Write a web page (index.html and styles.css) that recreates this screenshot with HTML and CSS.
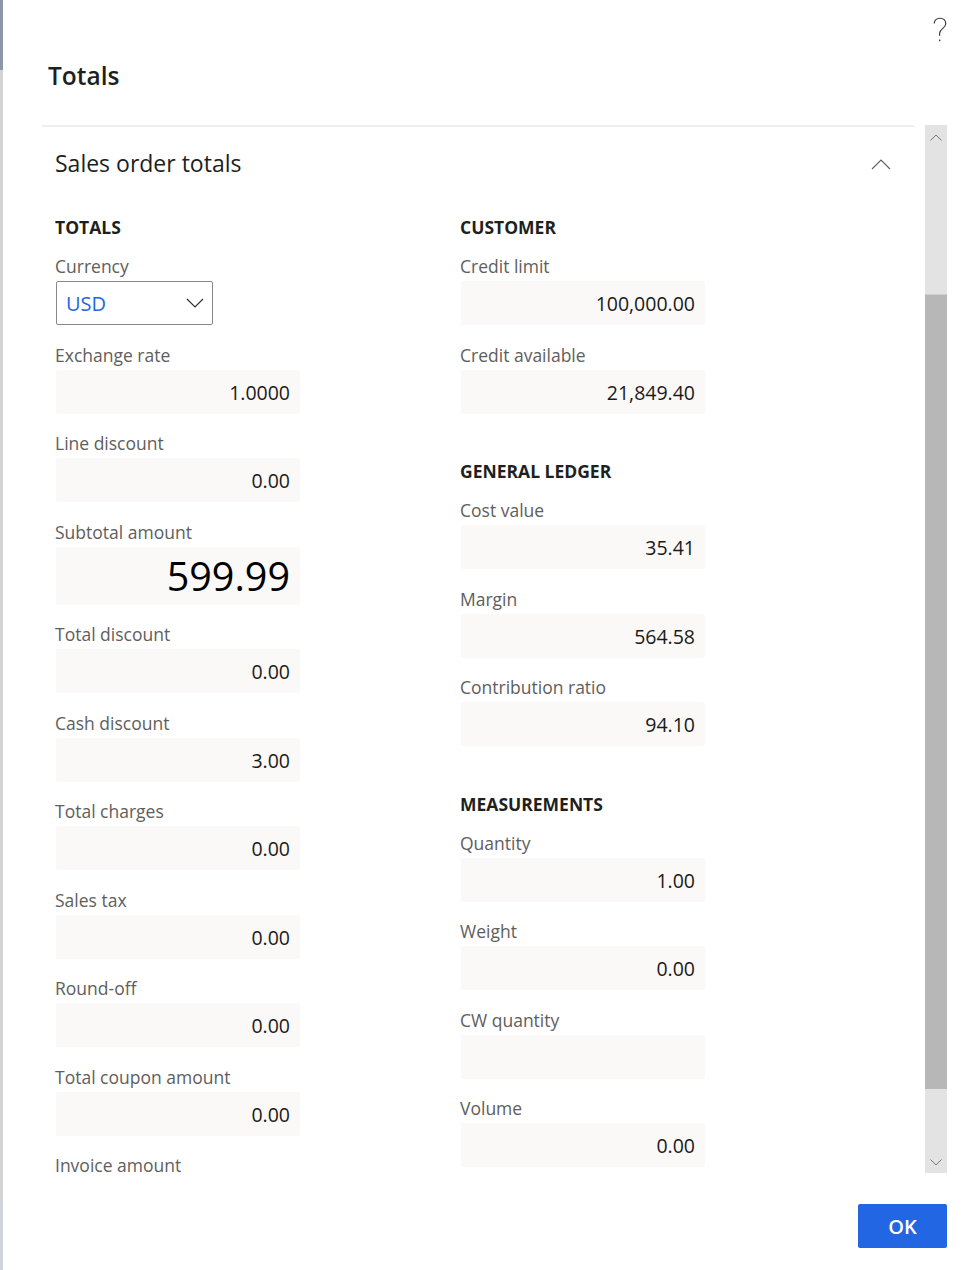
FILE: index.html
```html
<!DOCTYPE html>
<html lang="en">
<head>
<meta charset="utf-8">
<title>Totals</title>
<link rel="stylesheet" href="styles.css">
</head>
<body>
<div class="page">
  <div class="backdrop"><div class="backdrop-top"></div><div class="backdrop-mid"></div><div class="backdrop-bottom"></div></div>
  <div class="dialog">
    <header class="dialog-header">
      <h1 class="dialog-title">Totals</h1>
      <svg class="help-icon" width="16" height="26" viewBox="0 0 16 26" aria-label="Help">
        <path d="M2.2 6.6 C2.2 3.4 4.8 1.2 8 1.2 C11.2 1.2 13.8 3.4 13.8 6.6 C13.8 9.2 12.2 10.4 10.6 11.6 C9 12.8 7.6 14 7.6 16.6 L7.6 18.8" fill="none" stroke="#323130" stroke-width="1.1"/>
        <rect x="7" y="22.6" width="1.3" height="1.6" fill="#323130"/>
      </svg>
    </header>
    <div class="body-row">
      <div class="content">
        <div class="section-header">
          <h2 class="section-title">Sales order totals</h2>
          <svg class="collapse-icon" width="20" height="12" viewBox="0 0 20 12"><path d="M1 11 L10 2 L19 11" fill="none" stroke="#605e5c" stroke-width="1.1"/></svg>
        </div>
        <div class="columns">
          <div class="col">
            <div class="group">
              <div class="group-title">TOTALS</div>
              <div class="field">
                <div class="label">Currency</div>
                <div class="select"><span class="select-text">USD</span><svg width="18" height="10" viewBox="0 0 18 10"><path d="M1 1 L9 9 L17 1" fill="none" stroke="#323130" stroke-width="1.2"/></svg></div>
              </div>
              <div class="field"><div class="label">Exchange rate</div><div class="value">1.0000</div></div>
              <div class="field"><div class="label">Line discount</div><div class="value">0.00</div></div>
              <div class="field"><div class="label">Subtotal amount</div><div class="value big">599.99</div></div>
              <div class="field"><div class="label">Total discount</div><div class="value">0.00</div></div>
              <div class="field"><div class="label">Cash discount</div><div class="value">3.00</div></div>
              <div class="field"><div class="label">Total charges</div><div class="value">0.00</div></div>
              <div class="field"><div class="label">Sales tax</div><div class="value">0.00</div></div>
              <div class="field"><div class="label">Round-off</div><div class="value">0.00</div></div>
              <div class="field"><div class="label">Total coupon amount</div><div class="value">0.00</div></div>
              <div class="field"><div class="label">Invoice amount</div></div>
            </div>
          </div>
          <div class="col">
            <div class="group">
              <div class="group-title">CUSTOMER</div>
              <div class="field"><div class="label">Credit limit</div><div class="value">100,000.00</div></div>
              <div class="field"><div class="label">Credit available</div><div class="value">21,849.40</div></div>
            </div>
            <div class="group">
              <div class="group-title">GENERAL LEDGER</div>
              <div class="field"><div class="label">Cost value</div><div class="value">35.41</div></div>
              <div class="field"><div class="label">Margin</div><div class="value">564.58</div></div>
              <div class="field"><div class="label">Contribution ratio</div><div class="value">94.10</div></div>
            </div>
            <div class="group">
              <div class="group-title">MEASUREMENTS</div>
              <div class="field"><div class="label">Quantity</div><div class="value">1.00</div></div>
              <div class="field"><div class="label">Weight</div><div class="value">0.00</div></div>
              <div class="field"><div class="label">CW quantity</div><div class="value"></div></div>
              <div class="field"><div class="label">Volume</div><div class="value">0.00</div></div>
            </div>
          </div>
        </div>
      </div>
      <div class="scrollbar">
        <div class="sb-up"><svg width="12" height="7" viewBox="0 0 12 7"><path d="M0.5 6.5 L6 1 L11.5 6.5" fill="none" stroke="#777" stroke-width="1"/></svg></div>
        <div class="sb-thumb"></div>
        <div class="sb-down"><svg width="12" height="7" viewBox="0 0 12 7"><path d="M0.5 0.5 L6 6 L11.5 0.5" fill="none" stroke="#777" stroke-width="1"/></svg></div>
      </div>
    </div>
    <footer class="dialog-footer">
      <button class="ok-button" type="button">OK</button>
    </footer>
  </div>
</div>
</body>
</html>
```

FILE: styles.css
```css
html, body {
  margin: 0;
  padding: 0;
  background: #ffffff;
}

body {
  font-family: "Open Sans", "Noto Sans", sans-serif;
  color: #201f1e;
}

.page {
  display: flex;
  width: 968px;
  height: 1270px;
  overflow: hidden;
}

.backdrop {
  width: 3px;
  flex: none;
  display: flex;
  flex-direction: column;
}

.backdrop-top {
  height: 70px;
  background: #8e96a5;
}

.backdrop-mid {
  flex: 1;
  background: #d3d3d3;
}

.backdrop-bottom {
  height: 70px;
  background: #cfd3dd;
}

.dialog {
  flex: 1;
  display: flex;
  flex-direction: column;
  background: #ffffff;
}

.dialog-header {
  height: 125px;
  box-sizing: border-box;
  display: flex;
  justify-content: space-between;
  align-items: flex-start;
  padding: 0 20px 0 45px;
}

.dialog-title {
  margin: 60px 0 0 0;
  font-size: 24.5px;
  line-height: 32px;
  font-weight: 600;
  color: #201f1e;
}

.help-icon {
  margin-top: 17px;
  display: block;
}

.body-row {
  height: 1048px;
  display: flex;
  padding-left: 39px;
  padding-right: 21px;
  gap: 10px;
}

.content {
  flex: 1;
  border-top: 2px solid #efefef;
  border-top-right-radius: 3px;
  padding-left: 14px;
  box-sizing: border-box;
}

.section-header {
  height: 74px;
  display: flex;
  align-items: center;
  justify-content: space-between;
  padding-right: 24px;
}

.section-title {
  margin: -2px 0 0 -1px;
  font-size: 23px;
  line-height: 30px;
  font-weight: 400;
  color: #201f1e;
}

.collapse-icon {
  display: block;
}

.columns {
  display: grid;
  grid-template-columns: 244px 244px;
  column-gap: 161px;
  padding-top: 15px;
}

.group-title {
  font-size: 17.5px;
  line-height: 22px;
  font-weight: 700;
  margin: 0 0 18px -1px;
  color: #201f1e;
  white-space: nowrap;
}

.group + .group .group-title {
  margin-top: 46.5px;
}

.field {
  margin-bottom: 19.5px;
}

.label {
  font-size: 17.5px;
  line-height: 21px;
  font-weight: 500;
  margin: 0 0 4px -1px;
  color: #605e5c;
  white-space: nowrap;
}

.value {
  width: 244px;
  height: 44px;
  box-sizing: border-box;
  background: #faf9f8;
  border-radius: 2px;
  text-align: right;
  padding-right: 10px;
  font-size: 19.5px;
  line-height: 46px;
  color: #1b1a19;
  overflow: hidden;
}

.value.big {
  height: 58px;
  line-height: 59px;
  font-size: 39.5px;
  color: #000000;
}

.select {
  width: 157px;
  height: 44px;
  box-sizing: border-box;
  border: 1.5px solid #8a8886;
  border-radius: 2px;
  display: flex;
  align-items: center;
  justify-content: space-between;
  padding: 0 8px 0 9px;
}

.select-text {
  font-size: 20px;
  color: #2266e3;
}

.select svg {
  display: block;
}

.scrollbar {
  width: 22px;
  flex: none;
  display: flex;
  flex-direction: column;
  background: #e3e3e3;
}

.sb-up {
  height: 169px;
  display: flex;
  justify-content: center;
  align-items: flex-start;
  padding-top: 9px;
  box-sizing: border-box;
}

.sb-thumb {
  height: 795px;
  background: #b7b7b7;
  border-top: 1px solid #cfcfcf;
  box-sizing: border-box;
}

.sb-down {
  flex: 1;
  display: flex;
  justify-content: center;
  align-items: flex-end;
  padding-bottom: 7px;
  box-sizing: border-box;
}

.sb-up svg, .sb-down svg {
  display: block;
}

.dialog-footer {
  display: flex;
  justify-content: flex-end;
  padding: 31px 21px 0 0;
}

.ok-button {
  width: 89px;
  height: 44px;
  border: none;
  border-radius: 2px;
  background: #2266e3;
  color: #ffffff;
  font-family: "Open Sans", "Noto Sans", sans-serif;
  font-size: 20px;
  font-weight: 600;
  padding: 0;
}
```
